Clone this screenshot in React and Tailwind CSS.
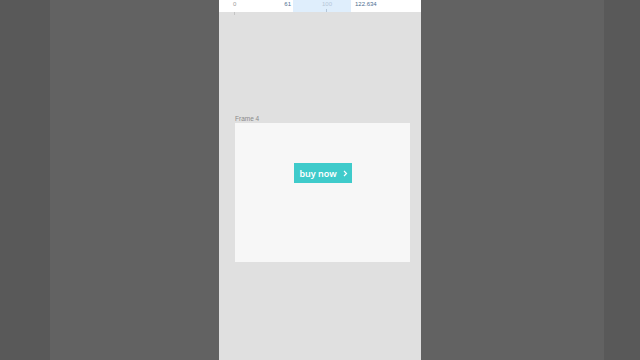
import React from 'react';

function Ruler() {
  return (
    <div className="h-[12px] bg-white flex items-start text-[6px] leading-[9px] font-['Liberation_Sans',sans-serif]">
      <div className="w-[74px] h-full flex justify-between pl-[14px] pr-[2px]">
        <span className="text-[#9a9a9a]">0</span>
        <span className="text-[#4d6e91]">61</span>
      </div>
      <div className="w-[58px] h-full bg-[#dfeefc] flex justify-center">
        <div className="ml-[10px] flex flex-col items-center">
          <span className="text-[#b5c6d8]">100</span>
          <div className="w-px h-[3px] bg-[#b5c6d8]" />
        </div>
      </div>
      <span className="pl-[4px] text-[#4d6e91]">122.634</span>
    </div>
  );
}

export default function App() {
  return (
    <div className="w-[640px] h-[360px] flex overflow-hidden bg-[#616161]">
      <div className="w-[50px] bg-[#595959]" />
      <div className="w-[169px] bg-[#626262]" />
      <div className="w-[202px] bg-[#e0e0e0] flex flex-col">
        <Ruler />
        <div className="ml-[15px] w-px h-[3px] bg-[#c4c4c4]" />
        <div className="pl-[16px] pr-[11px] pt-[100px]">
          <div className="text-[6.5px] leading-[8px] text-[#8a8a8a] font-['Liberation_Sans',sans-serif]">Frame 4</div>
          <div className="h-[139px] bg-[#f7f7f7] flex justify-center items-start pt-[40px]">
            <button className="w-[58px] h-[20px] bg-[#3fcbcb] text-white flex items-center justify-center gap-[6px] pl-[2px] font-['Noto_Sans',sans-serif] font-semibold text-[9px] leading-none">
              <span>buy now</span>
              <svg width="5" height="7" viewBox="0 0 5 7" fill="none">
                <path d="M1 1 L3.5 3.5 L1 6" stroke="white" strokeWidth="1.2" />
              </svg>
            </button>
          </div>
        </div>
      </div>
      <div className="w-[183px] bg-[#626262]" />
      <div className="flex-1 bg-[#595959]" />
    </div>
  );
}
